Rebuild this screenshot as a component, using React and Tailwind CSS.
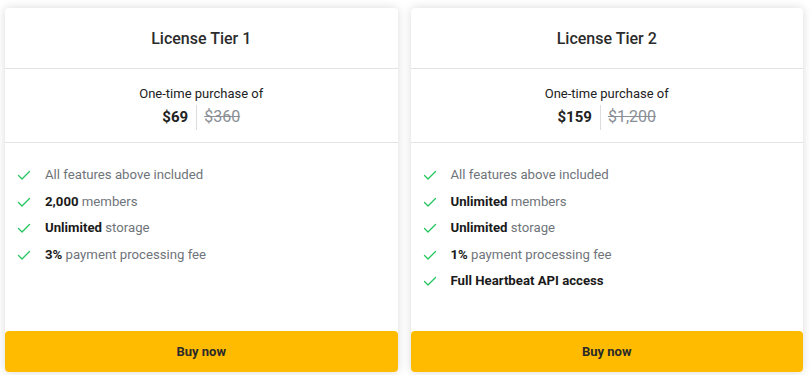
import React from "react";

const Check = () => (
  <svg width="14" height="14" viewBox="0 0 14 14" fill="none" className="shrink-0">
    <path d="M1.5 7.5 L5 11 L12.5 3.5" stroke="#22c55e" strokeWidth="1.3" strokeLinecap="round" strokeLinejoin="round" />
  </svg>
);

const tiers = [
  {
    title: "License Tier 1",
    price: "$69",
    old: "$360",
    features: [
      [null, "All features above included"],
      ["2,000", " members"],
      ["Unlimited", " storage"],
      ["3%", " payment processing fee"],
    ],
  },
  {
    title: "License Tier 2",
    price: "$159",
    old: "$1,200",
    features: [
      [null, "All features above included"],
      ["Unlimited", " members"],
      ["Unlimited", " storage"],
      ["1%", " payment processing fee"],
      ["Full Heartbeat API access", ""],
    ],
  },
];

function Card({ t }) {
  return (
    <div className="flex-1 flex flex-col bg-white rounded-[4px] shadow-[0_0_10px_rgba(0,0,0,0.15)]">
      <div className="h-[61px] flex items-center justify-center border-b border-[#e3e3e3]">
        <span className="text-[16px] font-medium text-[#2b2b2b] pt-[2px]">{t.title}</span>
      </div>
      <div className="h-[74px] flex flex-col items-center justify-center border-b border-[#e3e3e3] pt-[3px]">
        <div className="text-[13px] text-[#222] leading-[18px]">One-time purchase of</div>
        <div className="flex items-center mt-[2px]">
          <span className="text-[15px] font-bold text-[#222] leading-[22px] pr-[8px]">{t.price}</span>
          <span className="w-px h-[25px] bg-[#dddddd]" />
          <span className="text-[16px] text-[#8a8f96] line-through leading-[22px] pl-[7px]">{t.old}</span>
        </div>
      </div>
      <div className="flex-1 flex flex-col pt-[23px] pl-[12px] gap-[8.5px]">
        {t.features.map(([b, r], i) => (
          <div key={i} className="flex items-center h-[18px]">
            <Check />
            <span className="ml-[14px] text-[13.2px] leading-[18px] text-[#6f747a]">
              {b && <span className="font-bold text-[#1a1a1a]">{b}</span>}
              {r}
            </span>
          </div>
        ))}
      </div>
      <button className="h-[41px] w-full rounded-[4px] bg-[#ffbb00] text-[13px] font-bold text-[#2a2a2a]">
        Buy now
      </button>
    </div>
  );
}

export default function App() {
  return (
    <div
      className="w-[811px] h-[375px] bg-white flex gap-[13px] pl-[5px] pr-[8px] pt-[8px] pb-[3px]"
      style={{ fontFamily: "Roboto, 'Liberation Sans', sans-serif" }}
    >
      {tiers.map((t) => (
        <Card key={t.title} t={t} />
      ))}
    </div>
  );
}
